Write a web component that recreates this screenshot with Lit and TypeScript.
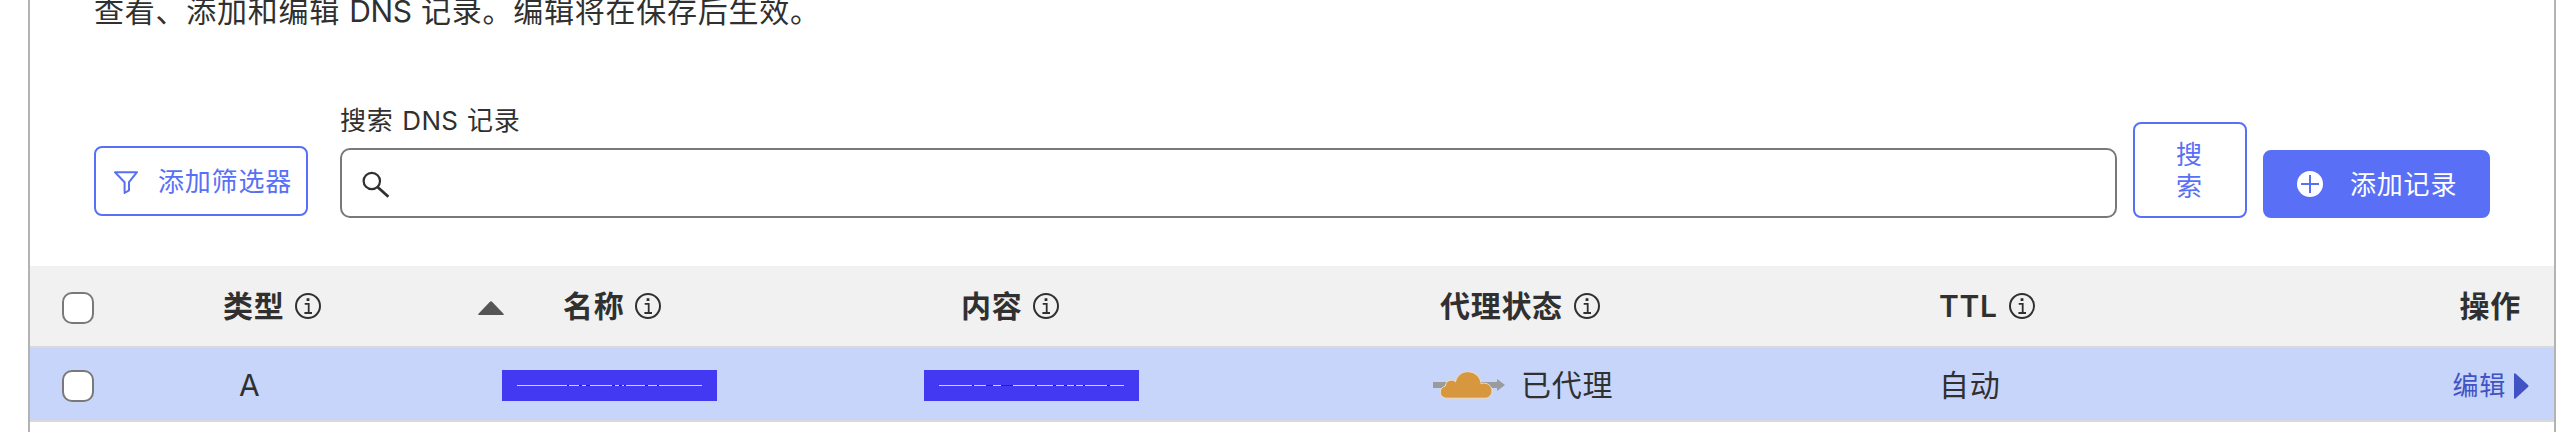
import { LitElement, html, css, svg } from "lit";
import { customElement, property } from "lit/decorators.js";

const infoIcon = html`<svg class="info" width="26" height="26" viewBox="0 0 26 26" fill="none" stroke="#303030">
  <circle cx="13" cy="13" r="12" stroke-width="2" />
  <path d="M9.7 10.8h4v9M9.4 20h7.6" stroke-width="1.8" />
  <rect x="11.6" y="5.2" width="2.8" height="2.8" fill="#303030" stroke="none" />
</svg>`;

@customElement("masked-value")
class MaskedValue extends LitElement {
  @property({ attribute: false }) marks: number[][] = [];

  static styles = css`
    :host { display: block; width: 215px; height: 31px; }
    svg { display: block; }
  `;

  render() {
    return html`<svg width="215" height="31" viewBox="0 0 215 31" shape-rendering="crispEdges">
      <rect width="215" height="31" fill="#4339f2" />
      <rect x="15" y="15" width="185" height="1" fill="#c8d5fa" />
      ${this.marks.map(([x, w]) => svg`<rect x=${x} y="15" width=${w} height="1" fill="#2c2d5c" />`)}
    </svg>`;
  }
}

@customElement("app-root")
class AppRoot extends LitElement {
  static styles = css`
    :host {
      display: block;
      height: 432px;
      overflow: hidden;
      background: #fff;
      color: #303030;
      font-family: Inter, "Noto Sans CJK SC", sans-serif;
      font-size: 30px;
    }
    * { box-sizing: border-box; }
    svg { display: block; flex: none; }
    .panel {
      width: 2528px;
      height: 432px;
      margin-left: 28px;
      border: solid #b3b3b3;
      border-width: 0 2px;
    }
    .intro {
      height: 22px;
      margin: 0;
      padding-left: 64px;
      line-height: 22px;
      letter-spacing: 0.75px;
      white-space: nowrap;
    }
    .latin { letter-spacing: -0.3px; }
    label .latin { letter-spacing: 0.4px; }
    .toolbar {
      display: flex;
      align-items: flex-end;
      height: 244px;
      padding: 0 64px 48px;
      font-size: 26px;
      letter-spacing: 0.8px;
    }
    button {
      font: inherit;
      letter-spacing: inherit;
      margin: 0;
      padding: 0;
      display: flex;
      align-items: center;
      border: 2px solid #5970f6;
      border-radius: 8px;
      background: #fff;
      color: #5970f6;
      white-space: nowrap;
      line-height: 32px;
    }
    .filter { width: 214px; height: 70px; margin: 0 32px 2px 0; padding: 2px 0 0 17px; gap: 19px; }
    .search { flex: 1; display: flex; flex-direction: column; }
    label { line-height: 30px; margin-bottom: 12px; word-spacing: 0.5px; }
    .field {
      display: flex;
      align-items: center;
      height: 70px;
      border: 2px solid #797979;
      border-radius: 10px;
      padding: 4px 0 0 20px;
    }
    .submit { width: 114px; height: 96px; margin: 0 16px; padding: 2px 41px 0; white-space: normal; }
    .submit span { width: 27px; line-break: anywhere; }
    .add { width: 227px; height: 68px; background: #5970f6; color: #fff; padding-left: 32px; gap: 27px; }
    .add span { padding-top: 1px; }
    .head, .row {
      display: grid;
      grid-template-columns: 194px 254px 446px 509px 507px 300px 1fr;
      grid-template-rows: 1fr;
      border-bottom: 2px solid #d9d9d9;
      letter-spacing: 0.7px;
      line-height: 40px;
      white-space: nowrap;
    }
    .head { height: 82px; background: #f1f1f1; font-weight: 600; }
    .row { height: 74px; background: #c8d5fa; padding-top: 2px; }
    .cell { display: flex; align-items: center; }
    .cell > span { margin-left: -1px; }
    .info { margin-left: 11px; }
    .head .check { padding: 4px 0 0 32px; }
    .row .check { padding: 2px 0 0 32px; }
    .box {
      appearance: none;
      width: 32px;
      height: 32px;
      margin: 0;
      border: 2px solid #797979;
      border-radius: 10px;
      background: #fff;
    }
    .sort { margin: 4px 60px 0 0; }
    .content { padding-left: 38px; }
    .proxy { padding-left: 8px; }
    .status { gap: 15px; }
    .ops { justify-content: flex-end; padding-right: 33px; }
    .row .kind { padding-left: 15px; }
    .masked { padding: 1px 0 0 24px; }
    .masked.plain { padding-left: 0; }
    .edit {
      justify-content: flex-end;
      padding: 2px 25px 0 0;
      gap: 8px;
      color: #4153c4;
      font-size: 26px;
    }
  `;

  private head(label: string, cls = "") {
    return html`<div class="cell ${cls}"><span>${label}</span>${infoIcon}</div>`;
  }

  render() {
    return html`<main class="panel" lang="zh-CN">
      <p class="intro">查看、添加和编辑 <span class="latin">DNS</span> 记录。编辑将在保存后生效。</p>
      <div class="toolbar">
        <button class="filter">
          <svg width="26" height="26" viewBox="0 0 26 26" fill="none" stroke="#5970f6" stroke-width="2" stroke-linejoin="round">
            <path d="M2 3.2H24L16 13.2V21.4L11.6 24V13.2Z" />
          </svg>
          <span>添加筛选器</span>
        </button>
        <div class="search">
          <label>搜索 <span class="latin">DNS</span> 记录</label>
          <div class="field">
            <svg width="28" height="28" viewBox="0 0 28 28" fill="none" stroke="#303030" stroke-width="2.2">
              <circle cx="9.8" cy="10" r="8.2" />
              <path d="M15.8 16.2L26.4 25.8" stroke-width="2.8" />
            </svg>
          </div>
        </div>
        <button class="submit"><span>搜索</span></button>
        <button class="add">
          <svg width="26" height="26" viewBox="0 0 26 26">
            <circle cx="13" cy="13" r="13" fill="#fff" />
            <path d="M13 4V22M4 13H22" stroke="#5970f6" stroke-width="2" />
          </svg>
          <span>添加记录</span>
        </button>
      </div>
      <div class="head">
        <div class="cell check"><input type="checkbox" class="box" /></div>
        ${this.head("类型")}
        <div class="cell">
          <svg class="sort" width="26" height="14" viewBox="0 0 26 14">
            <path d="M1.3 14Q-.5 14 .7 12.4L11.5 1.2Q13 -.6 14.5 1.2L25.3 12.4Q26.5 14 24.7 14Z" fill="#555" />
          </svg>
          <span>名称</span>${infoIcon}
        </div>
        ${this.head("内容", "content")}
        ${this.head("代理状态", "proxy")}
        ${this.head("TTL")}
        <div class="cell ops">操作</div>
      </div>
      <div class="row">
        <div class="cell check"><input type="checkbox" class="box" /></div>
        <div class="cell kind">A</div>
        <div class="cell masked">
          <masked-value .marks=${[[65, 2], [77, 3], [84, 4], [110, 3], [117, 3], [122, 2], [143, 3], [155, 2]]}></masked-value>
        </div>
        <div class="cell masked plain">
          <masked-value .marks=${[[48, 2], [62, 7], [77, 12], [111, 2], [129, 3], [140, 3], [150, 2], [159, 2], [183, 3]]}></masked-value>
        </div>
        <div class="cell status">
          <svg width="74" height="30" viewBox="0 0 74 30">
            <path d="M0 12H64V9L72 15L64 21V18H0Z" fill="#999b9c" />
            <path d="M14 28.2C9.8 28.2 7.3 25.3 7.3 22C7.3 19 9.4 16.6 12.4 16C12.4 12.4 15.2 10.2 18.2 10.2C20 10.2 21.4 10.8 22.5 11.8C23.9 5.8 28.6 1.7 34.6 1.7C42 1.7 47.6 7 48.1 13.8C49.3 13.2 50.4 13.1 51.6 13.2C55.7 13.4 59 16.8 59 20.9C59 25 55.9 28.2 52 28.2Z" fill="#d6973f" stroke="#f0dfc6" stroke-width="1" />
          </svg>
          <span>已代理</span>
        </div>
        <div class="cell"><span>自动</span></div>
        <div class="cell edit">
          <span>编辑</span>
          <svg width="15" height="26" viewBox="0 0 15 26">
            <path d="M0 1.4Q0 -.8 1.8 .8L14 12Q15 13 14 14L1.8 25.2Q0 26.8 0 24.6Z" fill="#4153c4" />
          </svg>
        </div>
      </div>
    </main>`;
  }
}
